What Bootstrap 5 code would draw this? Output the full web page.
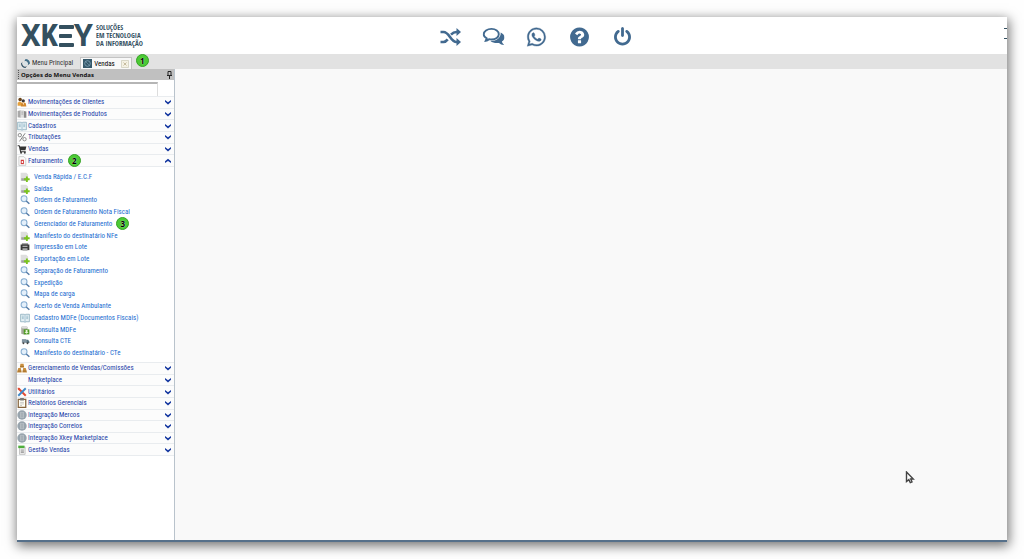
<!DOCTYPE html>
<html lang="pt-BR">
<head>
<meta charset="utf-8">
<meta name="viewport" content="width=device-width, initial-scale=1">
<title>XKEY - Vendas</title>
<link href="https://cdn.jsdelivr.net/npm/bootstrap@5.3.0/dist/css/bootstrap.min.css" rel="stylesheet">
<style>
  body { background: #fefefe; font-family: "Roboto Condensed", "Roboto", "Noto Sans", sans-serif; font-size: 7px; line-height: 10px; color: #222; }
  button, input { font: inherit; }
  .page-pad { padding: 17px; }
  .app-window { background: #f9f9f9; border-bottom: 2px solid #56708a; box-shadow: 1px 3px 11px 1px rgba(0,0,0,.55); }
  .app-head { height: 37px; background: #fff; color: #34556b; }
  .brand-word { font-family: "Roboto", sans-serif; font-weight: 700; font-size: 31px; line-height: 37px; color: #34505f; text-decoration: none; padding-left: 4px; }
  .brand-narrow { font-family: "Roboto Condensed", "Roboto", sans-serif; }
  .brand-tag { font-family: "Open Sans Condensed", "Open Sans", sans-serif; font-weight: 700; font-size: 7px; line-height: 8px; color: #34505f; padding-left: 3px; }
  .tool-row { left: 50%; top: 9px; transform: translateX(-50%); gap: 21px; padding-left: 49px; }
  .tool-btn { width: 22px; height: 22px; color: #426a90; }
  .menu-edge { width: 3px; height: 11px; border-top: 1px solid #34505f; border-bottom: 1px solid #34505f; }
  .plain-btn { border: 0; background: none; padding: 0; }
  .tab-strip { height: 15px; background: #e2e2e2; padding-left: 4px; }
  .tab-item { height: 12px; gap: 2px; color: #333; }
  .tab-item.on { background: #f8f8f8; border: 1px solid #c4c4c4; border-bottom: 0; padding: 0 2px; margin-left: 7px; }
  .tab-ico { width: 9px; height: 9px; flex: none; }
  .side { width: 158px; background: #fff; border-right: 1px solid #b9c3cc; }
  .side-title { height: 11px; background: #c0c0c0; font-family: "Open Sans", sans-serif; font-size: 6px; font-weight: 700; color: #111; gap: 1px; padding: 0 2px 0 1px; }
  .side-search { height: 14px; width: 141px; border: 0; border-top: 2px solid #b5b5b5; border-right: 1px solid #ddd; margin-top: 2px; }
  .menu-group { display: grid; grid-auto-rows: minmax(0, 1fr); }
  .rows-6 { height: 70px; }
  .rows-8 { height: 94px; border-bottom: 1px solid #e9ecef; }
  .rows-16 { height: 188px; }
  .sub-area { border-top: 1px solid #e9ecef; padding: 4px 0 3px; }
  .group-btn { color: #1b40a8; background: #fcfcfc; border: 0; border-top: 1px solid #e9ecef; gap: 1px; padding: 0 2px 0 0; text-align: left; }
  .sub-link { color: #1a6cd0; text-decoration: none; gap: 4px; padding-left: 3px; white-space: nowrap; }
  .ico { width: 10px; height: 10px; flex: none; }
  .ico-s { width: 8px; height: 8px; flex: none; }
  .step { width: 13px; height: 13px; border-radius: 50%; background: #4cca35; border: 1px solid #35a325; color: #000; font: 700 8px/11px "Open Sans", sans-serif; text-align: center; flex: none; text-shadow: 0 0 1px #fff; }
  .pointer { right: 92px; bottom: 56px; width: 10px; height: 13px; }
</style>
</head>
<body>
<svg class="d-none" xmlns="http://www.w3.org/2000/svg">
  <symbol id="i-down" viewBox="0 0 8 8"><path d="M1 2v1.800L4 6.600l3-2.800V2L4 4.300z" fill="#1437a0"/></symbol>
  <symbol id="i-up" viewBox="0 0 8 8"><path d="M1 6V4.300L4 1.700l3 2.600V6L4 3.900z" fill="#1437a0"/></symbol>
  <symbol id="i-people" viewBox="0 0 16 16"><circle cx="5" cy="4" r="2.800" fill="#6a4318"/><path d="M1 14V9l3-2 4 2v5z" fill="#e5a03c"/><circle cx="10" cy="6" r="2.600" fill="#3e3a3a"/><path d="M6 15l1-5 3-2 4 2 1 5z" fill="#d3872a"/><path d="M9 9h2l-1 4z" fill="#fff"/></symbol>
  <symbol id="i-box" viewBox="0 0 16 16"><path d="M1 3l5-1v12l-5-1z" fill="#a9a9a9"/><path d="M6 2h5v12H6z" fill="#dedede"/><path d="M11 3l4 1v10h-4z" fill="#8b8b8b"/><path d="M7 5h3M7 8h3M12 7h2" stroke="#888"/></symbol>
  <symbol id="i-book" viewBox="0 0 16 16"><path d="M1 2h6l1 1 1-1h6v12H9l-1 1-1-1H1z" fill="#e6f1f5" stroke="#6e98ac"/><path d="M8 3v12M3 5h3M3 7h3M3 9h3M10 5h3M10 7h3M10 9h3" stroke="#7fa9bd"/></symbol>
  <symbol id="i-pct" viewBox="0 0 16 16"><path d="M13 2L4 15" stroke="#777" stroke-width="1.500"/><circle cx="4.500" cy="5" r="2.700" fill="none" stroke="#888" stroke-width="1.500"/><circle cx="12" cy="11.500" r="2.700" fill="none" stroke="#888" stroke-width="1.500"/></symbol>
  <symbol id="i-cart" viewBox="0 0 16 16"><path d="M1 2h3l1 2h10l-1.500 6H6l.5 1.500H14V13H5L3 3.500H1z" fill="#333"/><circle cx="6.500" cy="14" r="1.500" fill="#333"/><circle cx="12.500" cy="14" r="1.500" fill="#333"/></symbol>
  <symbol id="i-doc" viewBox="0 0 16 16"><path d="M3 1h8l3 3v11H3z" fill="#fafafa" stroke="#b7b7b7"/><path d="M6 6h5v7H6z" fill="#d33b3b"/><path d="M7.500 8h2v3h-2z" fill="#fff"/></symbol>
  <symbol id="i-add" viewBox="0 0 16 16"><path d="M1 1h9l3 3v10H1z" fill="#dedede"/><path d="M2 10h8v4H2z" fill="#a2a2a2"/><path d="M9.500 7h3v3h3v3h-3v3h-3v-3h-3v-3h3z" fill="#7ac51d"/></symbol>
  <symbol id="i-find" viewBox="0 0 16 16"><circle cx="6.500" cy="6" r="4.700" fill="#e4f0fb" stroke="#88aed1" stroke-width="1.700"/><path d="M10 9.500l5 4.500" stroke="#557ca8" stroke-width="2.400"/></symbol>
  <symbol id="i-print" viewBox="0 0 16 16"><path d="M3 2h10v4H3z" fill="#888"/><path d="M1 4h14v9H1z" fill="#3a3a3a"/><path d="M4 6h8v2H4zM4 10h8v4H4z" fill="#aaa"/></symbol>
  <symbol id="i-db" viewBox="0 0 16 16"><path d="M2 3q5-3 10 0v11q-5 2-10 0z" fill="#a5a89c"/><ellipse cx="7" cy="3.500" rx="5" ry="2" fill="#ddd"/><path d="M6 7h9v8H6z" fill="#4c9a22"/><path d="M9 8h3v3h2l-3.500 3L7 11h2z" fill="#e9f5d8"/></symbol>
  <symbol id="i-truck" viewBox="0 0 16 16"><path d="M3 5h7v6H3z" fill="#8294a0"/><path d="M10 6h3l2 3v2h-5z" fill="#53707e"/><circle cx="5.500" cy="11.500" r="1.500" fill="#444"/><circle cx="12" cy="11.500" r="1.500" fill="#444"/></symbol>
  <symbol id="i-org" viewBox="0 0 16 16"><path d="M5.500 1h5l1 6h-7zM2 8h4l1.500 7H0zM10 8h4l2 7H8.500z" fill="#c98f3f"/><path d="M5 6h6M1 13h6M9 13h6" stroke="#8a5c20" fill="none"/></symbol>
  <symbol id="i-tools" viewBox="0 0 16 16"><path d="M2 2l12 12" stroke="#e24a32" stroke-width="3"/><path d="M14 2L2 14" stroke="#3f88c8" stroke-width="3"/><path d="M1 1l4 1-3 3z" fill="#e24a32"/></symbol>
  <symbol id="i-clip" viewBox="0 0 16 16"><path d="M2 2h12v13H2z" fill="#fffef5" stroke="#86653f" stroke-width="2"/><path d="M5 0h6v4H5z" fill="#777"/><path d="M5 7h6M5 9.500h6M5 12h3" stroke="#aaa"/></symbol>
  <symbol id="i-globe" viewBox="0 0 16 16"><circle cx="8" cy="8" r="7.500" fill="#98a4ad"/><path d="M5 4h6v8H5z" fill="#d5dadd"/><path d="M5 6h6M5 8h6M5 10h6M8 4v8" stroke="#8c979f"/></symbol>
  <symbol id="i-sheet" viewBox="0 0 16 16"><path d="M4 3h9v12H4z" fill="#eee" stroke="#aaa"/><path d="M2 1h10v4H2z" fill="#4fae3d"/><path d="M6 8h5M6 10h5M6 12h5" stroke="#777"/></symbol>
</svg>

<div class="page-pad vh-100">
  <div class="app-window h-100 d-flex flex-column">
    <header class="app-head d-flex align-items-center position-relative flex-shrink-0">
      <a class="brand-word d-flex align-items-center" href="#" aria-label="XKEY">
        <span>X<span class="brand-narrow">K</span></span>
        <svg width="16" height="22" viewBox="0 0 16 22" fill="#34505f"><rect x="1" width="15" height="4" rx="1"/><rect x="1" y="9" width="13" height="4" rx="1"/><rect x="1" y="18" width="15" height="4" rx="1"/></svg>
        <span>Y</span>
      </a>
      <div class="brand-tag">SOLUÇÕES<br>EM TECNOLOGIA<br>DA INFORMAÇÃO</div>
      <nav class="tool-row position-absolute d-flex">
        <button class="tool-btn plain-btn" aria-label="Alternar"><svg class="d-block" viewBox="0 0 22 22" fill="none" stroke="currentColor" stroke-width="2.600"><path d="M1 6h3c6 0 7 10 13 10h1M1 16h3c2 0 3-1 4.200-2.600M11.500 8.600C13 7 14 6 17 6h1"/><path d="M17 2l4.500 4L17 10zM17 12l4.500 4-4.500 4z" fill="currentColor" stroke="none"/></svg></button>
        <button class="tool-btn plain-btn" aria-label="Mensagens"><svg class="d-block" viewBox="0 0 22 22"><path d="M9 2.900c4.300 0 7.300 2.400 7.300 5.300s-3 5.300-7.300 5.300q-1.300 0-2.500-.3-1.600 1.300-3.300 1.600l1-2.500C2.500 11.300 1.200 9.900 1.200 8.200 1.200 5.300 4.700 2.900 9 2.900z" fill="none" stroke="currentColor" stroke-width="1.900"/><path d="M18.200 6.500c2.200 1.100 3.800 2.700 3.800 4.900 0 1.700-1 3.100-2.600 4.200.3 1.300 1 2.300 2.200 3.300-1.900.1-3.800-.8-5.100-2-3.300.5-6.500-.2-8.500-1.900 5.700.2 10.600-3 10.200-8.500z" fill="currentColor"/></svg></button>
        <button class="tool-btn plain-btn" aria-label="WhatsApp"><svg class="d-block" viewBox="-1.500 -1.500 19 19" fill="currentColor" stroke="currentColor" stroke-width=".3"><path d="M13.601 2.326A7.850 7.850 0 0 0 7.994 0C3.627 0 .068 3.558.064 7.926c0 1.399.366 2.760 1.057 3.965L0 16l4.204-1.102a7.900 7.900 0 0 0 3.790.965h.004c4.368 0 7.926-3.558 7.930-7.930A7.900 7.900 0 0 0 13.600 2.326zM7.994 14.521a6.600 6.600 0 0 1-3.356-.92l-.24-.144-2.494.654.666-2.433-.156-.251a6.560 6.560 0 0 1-1.007-3.505c0-3.626 2.957-6.584 6.591-6.584a6.560 6.560 0 0 1 4.660 1.931 6.560 6.560 0 0 1 1.928 4.660c-.004 3.639-2.961 6.592-6.592 6.592m3.615-4.934c-.197-.099-1.170-.578-1.353-.646-.182-.065-.315-.099-.445.099-.133.197-.513.646-.627.775-.114.133-.232.148-.43.05-.197-.1-.836-.308-1.592-.985-.59-.525-.985-1.175-1.103-1.372-.114-.198-.011-.304.088-.403.087-.088.197-.232.296-.346.1-.114.133-.198.198-.33.065-.134.034-.248-.015-.347-.05-.099-.445-1.076-.612-1.470-.16-.389-.323-.335-.445-.34-.114-.007-.247-.007-.38-.007a.73.73 0 0 0-.529.247c-.182.198-.691.677-.691 1.654s.71 1.916.81 2.049c.098.133 1.394 2.132 3.383 2.992.47.205.84.326 1.129.418.475.152.904.129 1.246.08.38-.058 1.171-.48 1.338-.943.164-.464.164-.86.114-.943-.049-.084-.182-.133-.38-.232"/></svg></button>
        <button class="tool-btn plain-btn" aria-label="Ajuda"><svg class="d-block" viewBox="0 0 1792 1792" fill="currentColor"><path d="M1024 1376v-192q0-14-9-23t-23-9h-192q-14 0-23 9t-9 23v192q0 14 9 23t23 9h192q14 0 23-9t9-23zM1280 704q0-88-55.500-163t-138.500-116-170-41q-243 0-371 213-15 24 8 42l132 100q7 6 19 6 16 0 25-12 53-68 86-92 34-24 86-24 48 0 85.500 26t37.500 59q0 38-20 61t-68 45q-63 28-115.500 86.500t-52.500 125.500v36q0 14 9 23t23 9h192q14 0 23-9t9-23q0-19 21.500-49.500t54.500-49.500q32-18 49-28.500t46-35 44.500-48 28-60.500 12.500-81zM1664 896q0 209-103 385.500t-279.500 279.500-385.500 103-385.500-103-279.500-279.500-103-385.500 103-385.500 279.500-279.500 385.500-103 385.500 103 279.500 279.500 103 385.500z"/></svg></button>
        <button class="tool-btn plain-btn" aria-label="Sair"><svg class="d-block" viewBox="-100 -100 1992 1992" fill="currentColor"><path d="M1664 896q0 156-61 298t-164 245-245 164-298 61-298-61-245-164-164-245-61-298q0-182 80.500-343t226.500-270q43-32 95.500-25t83.500 50q32 42 24.500 94.500t-49.500 84.500q-98 74-151.500 181t-53.500 228q0 104 40.500 198.500t109.500 163.500 163.500 109.500 198.500 40.500 198.500-40.500 163.500-109.500 109.500-163.500 40.500-198.500q0-121-53.500-228t-151.500-181q-42-32-49.500-84.500t24.500-94.500q31-43 84-50t95 25q146 109 226.500 270t80.500 343zM1024 128v640q0 52-38 90t-90 38-90-38-38-90v-640q0-52 38-90t90-38 90 38 38 90z"/></svg></button>
      </nav>
      <button class="menu-edge bg-transparent border-start-0 border-end-0 p-0 ms-auto mb-1" aria-label="Menu"></button>
    </header>

    <div class="tab-strip d-flex align-items-end flex-shrink-0">
      <button class="tab-item plain-btn d-flex align-items-center"><svg class="tab-ico" viewBox="0 0 16 16"><path d="M8 0a8 8 0 0 1 8 8l-4 3A5 5 0 0 0 6 4z" fill="#44708a"/><path d="M8 16a8 8 0 0 1-8-8l4-4a5 5 0 0 0 7 8z" fill="#345468"/><circle cx="8" cy="8" r="3" fill="#d7e2e8"/></svg>Menu Principal</button>
      <div class="tab-item on d-flex align-items-center"><svg class="tab-ico" viewBox="0 0 16 16"><path d="M0 0h16v16H0z" fill="#36586a"/><circle cx="8" cy="8" r="5" fill="none" stroke="#7fa3b5" stroke-width="1.500"/><path d="M4 4l8 8" stroke="#7fa3b5"/></svg><button class="plain-btn">Vendas</button>
        <button class="plain-btn d-flex ps-1" aria-label="Fechar"><svg class="ico-s" viewBox="0 0 16 16"><path d="M1 1h14v14H1z" fill="#f5f2e4" stroke="#bdb8a0"/><path d="M5 5l6 6M11 5l-6 6" stroke="#b5a98a" stroke-width="1.500"/></svg></button></div>
      <span class="step align-self-start ms-1">1</span>
    </div>

    <div class="d-flex flex-grow-1">
      <aside class="side flex-shrink-0">
        <div class="side-title d-flex align-items-center"><svg width="2" height="9" viewBox="0 0 2 9" fill="#555"><path d="M0 0h1v1H0zM0 2h1v1H0zM0 4h1v1H0zM0 6h1v1H0zM0 8h1v1H0z"/></svg><span>Opções do Menu Vendas</span>
          <button class="plain-btn d-flex ms-auto" aria-label="Fixar"><svg width="5" height="8" viewBox="0 0 5 8"><path d="M1 .5h3v4H1zM0 4.500h5M2.500 4.500V8" fill="none" stroke="#222"/></svg></button></div>
        <input class="side-search d-block p-0" type="text" aria-label="Pesquisar no menu">
        <div class="menu-group rows-6">
          <button class="group-btn d-flex align-items-center"><svg class="ico"><use href="#i-people"/></svg>Movimentações de Clientes<svg class="ico-s ms-auto"><use href="#i-down"/></svg></button>
          <button class="group-btn d-flex align-items-center"><svg class="ico"><use href="#i-box"/></svg>Movimentações de Produtos<svg class="ico-s ms-auto"><use href="#i-down"/></svg></button>
          <button class="group-btn d-flex align-items-center"><svg class="ico"><use href="#i-book"/></svg>Cadastros<svg class="ico-s ms-auto"><use href="#i-down"/></svg></button>
          <button class="group-btn d-flex align-items-center"><svg class="ico"><use href="#i-pct"/></svg>Tributações<svg class="ico-s ms-auto"><use href="#i-down"/></svg></button>
          <button class="group-btn d-flex align-items-center"><svg class="ico"><use href="#i-cart"/></svg>Vendas<svg class="ico-s ms-auto"><use href="#i-down"/></svg></button>
          <button class="group-btn d-flex align-items-center" data-bs-toggle="collapse" data-bs-target="#faturamento" aria-expanded="true"><svg class="ico"><use href="#i-doc"/></svg>Faturamento<span class="step ms-1">2</span><svg class="ico-s ms-auto"><use href="#i-up"/></svg></button>
        </div>
        <div id="faturamento" class="collapse show"><div class="sub-area">
          <nav class="menu-group rows-16">
            <a class="sub-link d-flex align-items-center" href="#"><svg class="ico"><use href="#i-add"/></svg>Venda Rápida / E.C.F</a>
            <a class="sub-link d-flex align-items-center" href="#"><svg class="ico"><use href="#i-add"/></svg>Saídas</a>
            <a class="sub-link d-flex align-items-center" href="#"><svg class="ico"><use href="#i-find"/></svg>Ordem de Faturamento</a>
            <a class="sub-link d-flex align-items-center" href="#"><svg class="ico"><use href="#i-find"/></svg>Ordem de Faturamento Nota Fiscal</a>
            <a class="sub-link d-flex align-items-center" href="#"><svg class="ico"><use href="#i-find"/></svg>Gerenciador de Faturamento<span class="step">3</span></a>
            <a class="sub-link d-flex align-items-center" href="#"><svg class="ico"><use href="#i-add"/></svg>Manifesto do destinatário NFe</a>
            <a class="sub-link d-flex align-items-center" href="#"><svg class="ico"><use href="#i-print"/></svg>Impressão em Lote</a>
            <a class="sub-link d-flex align-items-center" href="#"><svg class="ico"><use href="#i-add"/></svg>Exportação em Lote</a>
            <a class="sub-link d-flex align-items-center" href="#"><svg class="ico"><use href="#i-find"/></svg>Separação de Faturamento</a>
            <a class="sub-link d-flex align-items-center" href="#"><svg class="ico"><use href="#i-find"/></svg>Expedição</a>
            <a class="sub-link d-flex align-items-center" href="#"><svg class="ico"><use href="#i-find"/></svg>Mapa de carga</a>
            <a class="sub-link d-flex align-items-center" href="#"><svg class="ico"><use href="#i-find"/></svg>Acerto de Venda Ambulante</a>
            <a class="sub-link d-flex align-items-center" href="#"><svg class="ico"><use href="#i-book"/></svg>Cadastro MDFe (Documentos Fiscais)</a>
            <a class="sub-link d-flex align-items-center" href="#"><svg class="ico"><use href="#i-db"/></svg>Consulta MDFe</a>
            <a class="sub-link d-flex align-items-center" href="#"><svg class="ico"><use href="#i-truck"/></svg>Consulta CTE</a>
            <a class="sub-link d-flex align-items-center" href="#"><svg class="ico"><use href="#i-find"/></svg>Manifesto do destinatário - CTe</a>
          </nav>
        </div></div>
        <div class="menu-group rows-8">
          <button class="group-btn d-flex align-items-center"><svg class="ico"><use href="#i-org"/></svg>Gerenciamento de Vendas/Comissões<svg class="ico-s ms-auto"><use href="#i-down"/></svg></button>
          <button class="group-btn d-flex align-items-center"><span class="ico"></span>Marketplace<svg class="ico-s ms-auto"><use href="#i-down"/></svg></button>
          <button class="group-btn d-flex align-items-center"><svg class="ico"><use href="#i-tools"/></svg>Utilitários<svg class="ico-s ms-auto"><use href="#i-down"/></svg></button>
          <button class="group-btn d-flex align-items-center"><svg class="ico"><use href="#i-clip"/></svg>Relatórios Gerenciais<svg class="ico-s ms-auto"><use href="#i-down"/></svg></button>
          <button class="group-btn d-flex align-items-center"><svg class="ico"><use href="#i-globe"/></svg>Integração Mercos<svg class="ico-s ms-auto"><use href="#i-down"/></svg></button>
          <button class="group-btn d-flex align-items-center"><svg class="ico"><use href="#i-globe"/></svg>Integração Correios<svg class="ico-s ms-auto"><use href="#i-down"/></svg></button>
          <button class="group-btn d-flex align-items-center"><svg class="ico"><use href="#i-globe"/></svg>Integração Xkey Marketplace<svg class="ico-s ms-auto"><use href="#i-down"/></svg></button>
          <button class="group-btn d-flex align-items-center"><svg class="ico"><use href="#i-sheet"/></svg>Gestão Vendas<svg class="ico-s ms-auto"><use href="#i-down"/></svg></button>
        </div>
      </aside>
      <main class="flex-grow-1 position-relative">
        <svg class="pointer position-absolute" viewBox="0 0 9 13"><path d="M1 1v9.500l2.300-1.900 1.500 3 1.700-.8L5.200 8h2.600z" fill="#fff" stroke="#444" stroke-width="1.400"/></svg>
      </main>
    </div>
  </div>
</div>
<script src="https://cdn.jsdelivr.net/npm/bootstrap@5.3.0/dist/js/bootstrap.bundle.min.js"></script>
</body>
</html>
